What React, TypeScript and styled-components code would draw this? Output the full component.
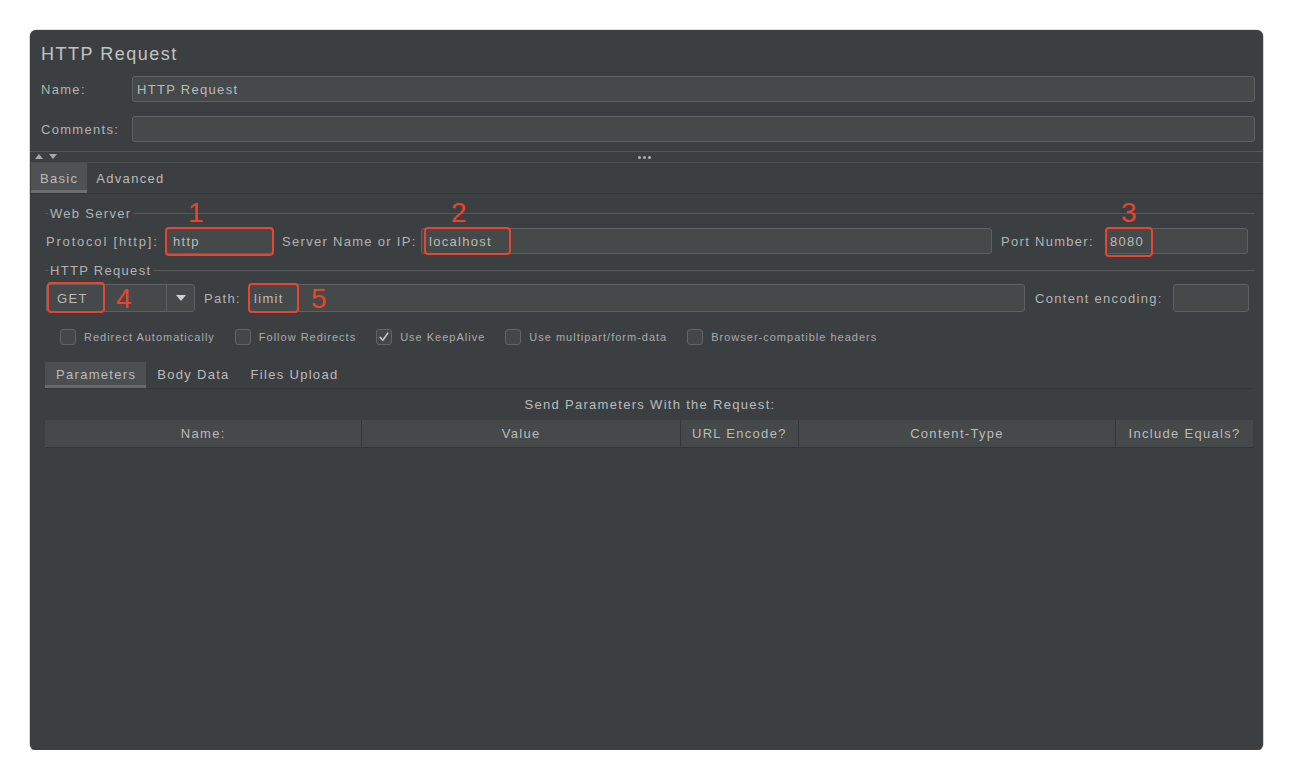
import React from "react";
import styled, { createGlobalStyle } from "styled-components";

const GlobalStyle = createGlobalStyle`
  html, body {
    margin: 0;
    padding: 0;
    background: #ffffff;
  }
  body {
    font-family: "Liberation Sans", Arial, sans-serif;
  }
  * {
    box-sizing: border-box;
  }
`;

const TEXT = "#bbbbbb";
const FIELD_BG = "#45494a";
const FIELD_BORDER = "#5d6163";
const RED = "#e8442e";

export default function App() {
  return (
    <>
      <GlobalStyle />
      <Page>
        <Window>
          <Header>
            <Title>HTTP Request</Title>
            <HeaderRow $top={10}>
              <HeaderLabel>Name:</HeaderLabel>
              <Field $pad={4}>HTTP Request</Field>
            </HeaderRow>
            <HeaderRow $top={14}>
              <HeaderLabel>Comments:</HeaderLabel>
              <Field />
            </HeaderRow>
          </Header>

          <Splitter>
            <Arrows>
              <ArrowUp />
              <ArrowDown />
            </Arrows>
            <Dots>
              <Dot />
              <Dot />
              <Dot />
            </Dots>
          </Splitter>

          <TabBar>
            <Tab $active>Basic</Tab>
            <Tab>Advanced</Tab>
          </TabBar>

          <Content>
            <SectionHead $top={11}>Web Server</SectionHead>
            <Row $top={7} $right={7}>
              <Label $left={1} $w={120} $wide>
                Protocol [http]:
              </Label>
              <Field $width={107} $pad={6}>
                http
                <Mark style={{ left: -2, top: -2, width: 109, height: 29 }} />
                <Num style={{ left: 21, top: -30 }}>1</Num>
              </Field>
              <Label $left={9} $w={139}>
                Server Name or IP:
              </Label>
              <Field $pad={7}>
                localhost
                <Mark style={{ left: 2, top: -2, width: 87, height: 28 }} />
                <Num style={{ left: 29, top: -30 }}>2</Num>
              </Field>
              <Label $left={9} $w={104}>
                Port Number:
              </Label>
              <Field $width={143} $pad={4}>
                8080
                <Mark style={{ left: -1, top: -2, width: 48, height: 30 }} />
                <Num style={{ left: 15, top: -30 }}>3</Num>
              </Field>
            </Row>

            <SectionHead $top={8}>HTTP Request</SectionHead>
            <Row $top={6} $right={6}>
              <Combo>
                <ComboValue>GET</ComboValue>
                <ComboArrow>
                  <Caret />
                </ComboArrow>
                <Mark style={{ left: 0, top: -3, width: 58, height: 31 }} />
                <Num style={{ left: 69, top: 0 }}>4</Num>
              </Combo>
              <Label $left={9} $w={44}>
                Path:
              </Label>
              <Field $height={28} $pad={5}>
                limit
                <Mark style={{ left: -1, top: -2, width: 51, height: 30 }} />
                <Num style={{ left: 62, top: 0 }}>5</Num>
              </Field>
              <Label $left={10} $w={138}>
                Content encoding:
              </Label>
              <Field $width={76} $height={28} />
            </Row>

            <Checks>
              <Check>
                <Box />
                Redirect Automatically
              </Check>
              <Check>
                <Box />
                Follow Redirects
              </Check>
              <Check>
                <Box>
                  <svg width="12" height="12" viewBox="0 0 12 12">
                    <path
                      d="M2.2 6.4 L4.8 9.2 L9.8 2.2"
                      fill="none"
                      stroke="#c4c4c4"
                      strokeWidth="1.6"
                      strokeLinecap="round"
                      strokeLinejoin="round"
                    />
                  </svg>
                </Box>
                Use KeepAlive
              </Check>
              <Check>
                <Box />
                Use multipart/form-data
              </Check>
              <Check>
                <Box />
                Browser-compatible headers
              </Check>
            </Checks>

            <SubTabBar>
              <SubTab $active>Parameters</SubTab>
              <SubTab>Body Data</SubTab>
              <SubTab>Files Upload</SubTab>
            </SubTabBar>

            <Caption>Send Parameters With the Request:</Caption>

            <Table>
              <HeadCell>Name:</HeadCell>
              <HeadCell>Value</HeadCell>
              <HeadCell>URL Encode?</HeadCell>
              <HeadCell>Content-Type</HeadCell>
              <HeadCell>Include Equals?</HeadCell>
            </Table>
          </Content>
        </Window>
      </Page>
    </>
  );
}

const Page = styled.div`
  padding: 30px 0 0 30px;
`;

const Window = styled.div`
  width: 1233px;
  height: 720px;
  background: #3c3f41;
  border-radius: 6px;
  box-shadow: 0 1px 1px rgba(0, 0, 0, 0.45), 0 0 0 0.5px rgba(0, 0, 0, 0.25);
  overflow: hidden;
  display: flex;
  flex-direction: column;
  color: ${TEXT};
  font-size: 13px;
  letter-spacing: 1.3px;
`;

const Header = styled.div`
  padding: 12px 8px 0 11px;
`;

const Title = styled.div`
  height: 24px;
  line-height: 24px;
  font-size: 18px;
  letter-spacing: 1.5px;
  color: #c3c3c3;
`;

const HeaderRow = styled.div<{ $top: number }>`
  display: grid;
  grid-template-columns: 91px 1fr;
  align-items: center;
  margin-top: ${(p) => p.$top}px;
`;

const HeaderLabel = styled.div`
  color: #b3b3b3;
`;

const Field = styled.div<{ $width?: number; $height?: number; $pad?: number }>`
  position: relative;
  flex: ${(p) => (p.$width ? `0 0 ${p.$width}px` : "1 1 0")};
  height: ${(p) => p.$height ?? 26}px;
  display: flex;
  align-items: center;
  padding-left: ${(p) => p.$pad ?? 5}px;
  background: ${FIELD_BG};
  border: 1px solid ${FIELD_BORDER};
  border-radius: 3px;
  color: ${TEXT};
  white-space: nowrap;
`;

const Mark = styled.span`
  position: absolute;
  border: 2px solid ${RED};
  border-radius: 4px;
  pointer-events: none;
`;

const Num = styled.span`
  position: absolute;
  font-family: "Liberation Sans", Arial, sans-serif;
  font-size: 28px;
  line-height: 28px;
  letter-spacing: 0;
  color: ${RED};
  font-weight: 400;
  pointer-events: none;
`;

const Splitter = styled.div`
  position: relative;
  margin-top: 9px;
  height: 12px;
  border-top: 1px solid #55585a;
  border-bottom: 1px solid #4b4e50;
  display: flex;
  align-items: center;
  justify-content: center;
`;

const Arrows = styled.div`
  position: absolute;
  left: 5px;
  top: 2px;
  display: flex;
  gap: 6px;
`;

const ArrowUp = styled.span`
  width: 0;
  height: 0;
  border-left: 4px solid transparent;
  border-right: 4px solid transparent;
  border-bottom: 5px solid #a8a8a8;
`;

const ArrowDown = styled.span`
  width: 0;
  height: 0;
  border-left: 4px solid transparent;
  border-right: 4px solid transparent;
  border-top: 5px solid #a8a8a8;
`;

const Dots = styled.div`
  display: flex;
  gap: 2px;
  margin-left: -4px;
`;

const Dot = styled.span`
  width: 3px;
  height: 3px;
  border-radius: 50%;
  background: #b0b0b0;
`;

const TabBar = styled.div`
  display: flex;
  padding-left: 1px;
  border-bottom: 1px solid #333537;
`;

const Tab = styled.div<{ $active?: boolean }>`
  height: 30px;
  padding: 3px 9px 0;
  display: flex;
  align-items: center;
  background: ${(p) => (p.$active ? "#4e5254" : "transparent")};
  border-bottom: 3px solid ${(p) => (p.$active ? "#6b6f72" : "transparent")};
  color: ${TEXT};
`;

const Content = styled.div`
  display: flex;
  flex-direction: column;
  padding: 0 8px 0 15px;
`;

const SectionHead = styled.div<{ $top: number }>`
  display: flex;
  align-items: center;
  height: 16px;
  margin-top: ${(p) => p.$top}px;
  color: #b3b3b3;
  white-space: nowrap;

  &::before {
    content: "";
    width: 3px;
    height: 1px;
    background: #56595b;
    margin-right: 2px;
  }

  &::after {
    content: "";
    flex: 1;
    height: 1px;
    background: #56595b;
    margin-left: 2px;
  }
`;

const Row = styled.div<{ $top: number; $right: number }>`
  display: flex;
  align-items: center;
  margin-top: ${(p) => p.$top}px;
  padding-right: ${(p) => p.$right}px;
`;

const Label = styled.span<{ $left: number; $w: number; $wide?: boolean }>`
  flex: 0 0 ${(p) => p.$w}px;
  margin-left: ${(p) => p.$left}px;
  color: #b3b3b3;
  white-space: nowrap;
  letter-spacing: ${(p) => (p.$wide ? 1.8 : 1.3)}px;
`;

const Combo = styled.div`
  position: relative;
  flex: 0 0 149px;
  height: 28px;
  display: flex;
  margin-left: 1px;
  background: ${FIELD_BG};
  border: 1px solid ${FIELD_BORDER};
  border-radius: 3px;
`;

const ComboValue = styled.div`
  flex: 1;
  display: flex;
  align-items: center;
  padding-left: 10px;
  border-right: 1px solid ${FIELD_BORDER};
  color: ${TEXT};
`;

const ComboArrow = styled.div`
  flex: 0 0 27px;
  display: flex;
  align-items: center;
  justify-content: center;
`;

const Caret = styled.span`
  width: 0;
  height: 0;
  border-left: 5px solid transparent;
  border-right: 5px solid transparent;
  border-top: 6px solid #cfcfcf;
`;

const Checks = styled.div`
  display: flex;
  align-items: center;
  gap: 20px;
  margin-top: 17px;
  padding-left: 15px;
  height: 16px;
`;

const Check = styled.label`
  display: flex;
  align-items: center;
  gap: 8px;
  font-size: 11px;
  letter-spacing: 1px;
  color: #a9abad;
  white-space: nowrap;
`;

const Box = styled.span`
  width: 16px;
  height: 16px;
  border: 1px solid #606466;
  border-radius: 3px;
  background: #43474a;
  display: flex;
  align-items: center;
  justify-content: center;
`;

const SubTabBar = styled.div`
  display: flex;
  margin-top: 17px;
  margin-right: 2px;
  border-bottom: 1px solid #343638;
`;

const SubTab = styled.div<{ $active?: boolean }>`
  height: 26px;
  padding: 2px 10px 0 11px;
  display: flex;
  align-items: center;
  background: ${(p) => (p.$active ? "#4b4f51" : "transparent")};
  border-bottom: 3px solid ${(p) => (p.$active ? "#666a6d" : "transparent")};
  color: ${TEXT};
`;

const Caption = styled.div`
  margin-top: 8px;
  height: 16px;
  line-height: 16px;
  text-align: center;
  color: ${TEXT};
`;

const Table = styled.div`
  display: grid;
  grid-template-columns: 317fr 318fr 117fr 317fr 137fr;
  column-gap: 1px;
  margin-top: 7px;
  margin-right: 2px;
  background: #36393b;
  border-bottom: 1px solid #333537;
`;

const HeadCell = styled.div`
  height: 27px;
  display: flex;
  align-items: center;
  justify-content: center;
  background: #45494a;
  color: ${TEXT};
  white-space: nowrap;
`;
